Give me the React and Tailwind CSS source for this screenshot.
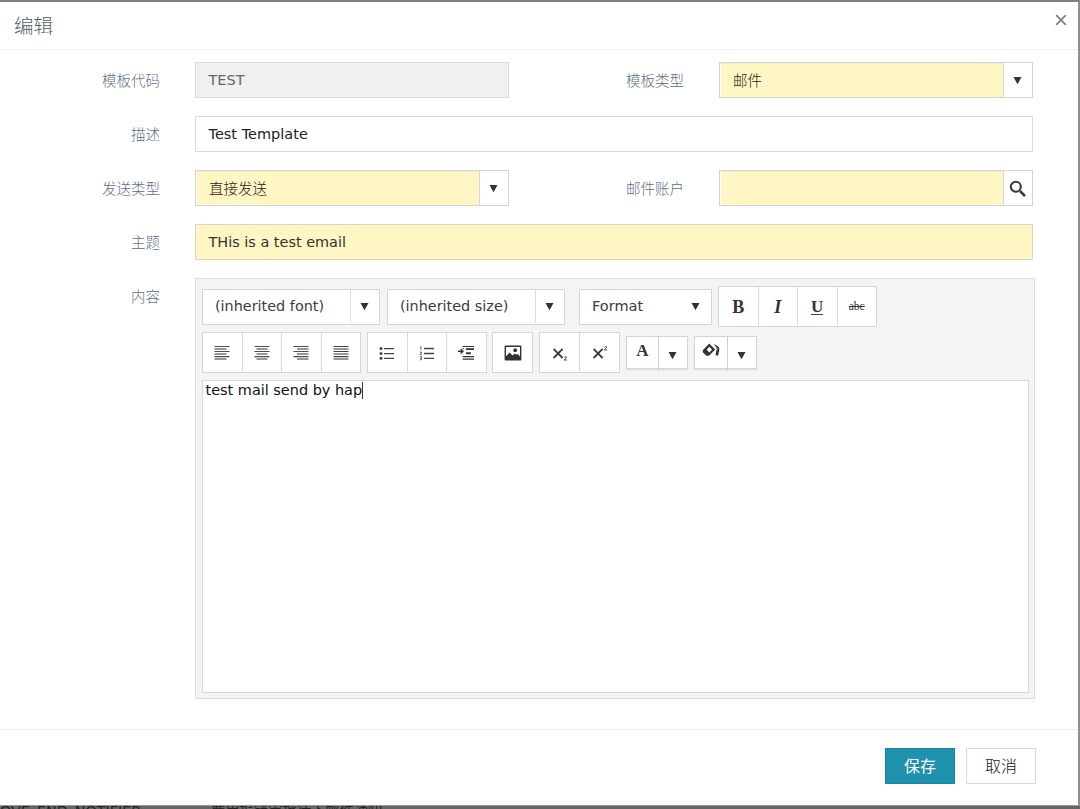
import React from 'react';

const Caret = ({ className = '' }) => (
  <svg className={className} width="9" height="9" viewBox="0 0 9 9" fill="#333">
    <path d="M0.5 1.1h8L4.5 8.2z" />
  </svg>
);

const Label = ({ children, className = '' }) => (
  <label className={`shrink-0 pt-px text-right text-[14.5px] leading-[37px] font-light text-[#5f7088] ${className}`}>
    {children}
  </label>
);

const Row = ({ children }) => <div className="flex h-9">{children}</div>;

function ComboBox({ value, className = '', icon }) {
  return (
    <div className={`flex h-9 border border-[#d5d5d5] bg-white ${className}`}>
      <div className="flex-1 border-t border-l border-t-[#f3ecc8] border-l-[#fffdf0] bg-[#fff6c4] pl-3 text-[14.5px] leading-[34px] text-[#222]">
        {value}
      </div>
      <div className="flex w-[29px] items-center justify-center border-l border-[#d5d5d5] pr-px">
        {icon || <Caret />}
      </div>
    </div>
  );
}

function ToolSelect({ value }) {
  return (
    <div className="flex h-9 w-[178px] border border-[#d5d5d5] bg-white text-[14.4px] leading-[33px] text-[#3c3c3c]">
      <div className="flex-1 pl-3 whitespace-nowrap">{value}</div>
      <div className="flex h-[33px] w-[29px] items-center justify-center border-l border-[#dcdcdc] pr-px">
        <Caret />
      </div>
    </div>
  );
}

const ToolGroup = ({ children, className = '' }) => (
  <div className={`flex h-[41px] divide-x divide-[#d9d9d9] border border-[#d5d5d5] bg-white text-[#333] ${className}`}>
    {React.Children.map(children, (child) => (
      <div className="flex flex-1 items-center justify-center">{child}</div>
    ))}
  </div>
);

function Lines({ from, to }) {
  return (
    <svg width="16" height="16" viewBox="0 0 16 16" fill="none">
      <path stroke="#444" strokeWidth="1.2" d="M0.5 1.5H15.5M0.5 6.5H15.5M0.5 11.6H15.5" className={from === 0.5 && to === 15.5 ? '' : 'opacity-95'} />
      <path stroke="#777" strokeWidth="1.7" d={`M${from} 4H${to}M${from} 9H${to}M${from} 14H${to}`} />
    </svg>
  );
}

const BulletIcon = () => (
  <svg width="16" height="16" viewBox="0 0 16 16" fill="#444">
    <circle cx="2" cy="3.5" r="1.5" />
    <circle cx="2" cy="8.5" r="1.5" />
    <circle cx="2" cy="13.3" r="1.5" />
    <path d="M5 2.9H15V4.2H5zM5 7.9H15V9.2H5zM5 12.7H15V14H5z" />
  </svg>
);

const NumberIcon = () => (
  <svg width="16" height="16" viewBox="0 0 16 16" fill="none" stroke="#444">
    <path strokeWidth="1.3" d="M5 3.5H15M5 8.5H15M5 13.3H15" />
    <path strokeWidth="0.8" d="M1 2.2L2 1.7V4.8M0.8 7H2.4V8L1 9.4H2.8M0.8 11.7H2.5V14.8H0.8M1.2 13.2H2.5" />
  </svg>
);

const IndentIcon = () => (
  <svg width="18" height="16" viewBox="0 0 18 16" fill="#333">
    <path d="M0 5.5H2.6V3.2L6 6.3L2.6 9.4V7.1H0z" />
    <path d="M4.6 0.9H16V2.1H4.6zM8 3.3H16V5.1H8zM8 7.3H12.8V9.2H8zM4.6 11H16V12.2H4.6zM4.6 13.5H16V14.7H4.6zM4.6 3.3H6.2V4.3H4.6z" />
  </svg>
);

const ImageIcon = () => (
  <svg width="18" height="16" viewBox="0 0 18 16" fill="#333">
    <path
      fillRule="evenodd"
      d="M1.6 0.6H16.4Q17.4 0.6 17.4 1.6V14.4Q17.4 15.4 16.4 15.4H1.6Q0.6 15.4 0.6 14.4V1.6Q0.6 0.6 1.6 0.6zM2 2V11.2L5.6 7.4L8.6 10.4L10.6 8.6L12.4 9.8L13.8 9L16 11.4V2z"
    />
    <circle cx="11.2" cy="5.2" r="1.9" />
  </svg>
);

const ScriptIcon = ({ sup }) => (
  <svg width="18" height="18" viewBox="0 0 18 18" fill="none" stroke="#3a3a3a">
    <path strokeWidth="1.8" d="M2.6 4.9L11.6 14M11.6 4.9L2.6 14" />
    <path
      strokeWidth="0.9"
      d={sup ? 'M13.4 3.1Q14.7 2.1 15.7 2.9Q16 3.8 13.3 5.9H16.2' : 'M13.2 13.2Q14.5 12.2 15.5 13Q15.8 13.9 13.1 16H16'}
    />
  </svg>
);

const BucketIcon = () => (
  <svg width="18" height="15" viewBox="0 0 18 15" fill="#333">
    <path fillRule="evenodd" d="M0.8 7.2L7.2 0.6L13.2 6.6L7 12.8H4.4L0.8 9.2zM7.4 3.8L4.7 6.8L7.4 9.4L10 6.8z" />
    <path d="M9.2 1Q13.3 1.4 13.8 4.6L14.6 6.4L13.6 11.8L15 12.8L16.2 12.2L17.4 6.4Q17.2 1.6 9.2 1z" />
    <path stroke="#fff" strokeWidth="0.7" fill="none" d="M10.4 1.8Q14.9 3.2 15.1 7.2" />
  </svg>
);

const SearchIcon = () => (
  <svg className="mt-0.5" width="18" height="18" viewBox="0 0 18 18" fill="none" stroke="#3a3a3a">
    <circle cx="6.8" cy="6.8" r="5" strokeWidth="2.1" />
    <path strokeWidth="2.6" d="M11 11L16 16.1" />
  </svg>
);

function ColorTool({ children, className = '' }) {
  return (
    <div className={`flex h-[33px] border border-[#d5d5d5] bg-white shadow-[0_1px_1px_#e2e2e2] ${className}`}>
      <div className="flex flex-1 items-center justify-center pb-[5px]">{children}</div>
      <div className="flex h-[34px] w-[29px] items-center justify-center border-l border-[#d0d0d0] pt-[2px] pr-px">
        <Caret />
      </div>
    </div>
  );
}

function Editor() {
  return (
    <div className="flex h-[421px] w-[840px] flex-col border border-[#dcdcdc] bg-[#f4f4f4] pt-[7px] pr-[5px] pb-[5px] pl-1.5">
      <div className="flex h-[41px] items-center">
        <ToolSelect value="(inherited font)" />
        <div className="w-[7px]" />
        <ToolSelect value="(inherited size)" />
        <div className="ml-3.5 flex h-9 w-[133px] justify-between border border-[#d5d5d5] bg-white pr-[11px] pl-3 text-[14.5px] leading-[33px] text-[#3c3c3c]">
          Format
          <Caret className="mt-3" />
        </div>
        <ToolGroup className="ml-1.5 w-[159px] font-['Liberation_Serif',serif]">
          <span className="pt-0.5 text-[18px] font-bold">B</span>
          <span className="pt-0.5 text-[18px] font-bold italic">I</span>
          <span className="border-b border-[#444] text-[17px] leading-[15px] font-bold">U</span>
          <span className="text-[11.5px] line-through">abc</span>
        </ToolGroup>
      </div>
      <div className="mt-[5px] flex h-[41px] items-center">
        <ToolGroup className="w-[159px]">
          <Lines from={0.5} to={12.5} />
          <Lines from={2.5} to={13.5} />
          <Lines from={4} to={15.5} />
          <Lines from={0.5} to={15.5} />
        </ToolGroup>
        <ToolGroup className="ml-1.5 w-[120px]">
          <BulletIcon />
          <NumberIcon />
          <IndentIcon />
        </ToolGroup>
        <ToolGroup className="ml-[5px] w-[41px]">
          <ImageIcon />
        </ToolGroup>
        <ToolGroup className="ml-1.5 w-[81px]">
          <ScriptIcon />
          <ScriptIcon sup />
        </ToolGroup>
        <ColorTool className="ml-1.5 w-[62px]">
          <span className="font-['Liberation_Serif',serif] text-[17px] leading-none font-bold text-[#333]">A</span>
        </ColorTool>
        <ColorTool className="ml-1.5 w-[63px]">
          <BucketIcon />
        </ColorTool>
      </div>
      <div className="mt-[7px] flex-1 border border-[#d8d8d8] bg-white pl-[2.5px] text-[14.45px] leading-[19px] text-[#111]">
        test mail send by hap<span className="inline-block h-[17px] w-px bg-[#333] align-[-4px]" />
      </div>
    </div>
  );
}

export default function App() {
  return (
    <div className="h-[809px] w-[1080px] overflow-hidden bg-[#666] font-['DejaVu_Sans','Noto_Sans_CJK_SC',sans-serif]">
      <div className="flex h-[806px] flex-col border-t-2 border-r-2 border-b border-t-[#7e8183] border-r-[#8d8f91] border-b-[#999] bg-white">
        <header className="flex h-12 shrink-0 justify-between border-b border-[#f0f0f0] pr-[11px] pl-3.5">
          <h1 className="text-[19.5px] leading-[49px] font-light text-[#4f6167]">编辑</h1>
          <svg className="mt-3" width="12" height="12" viewBox="0 0 12 12" stroke="#808080" strokeWidth="1.8">
            <path d="M1.2 1.2L10.8 10.8M10.8 1.2L1.2 10.8" />
          </svg>
        </header>

        <main className="flex flex-1 flex-col gap-[18px] pt-3">
          <Row>
            <Label className="mr-[35px] w-40">模板代码</Label>
            <div className="w-[314px] border border-[#d9d9d9] bg-[#f0f0f0] pl-[12.5px] text-[14.5px] leading-[35px] text-[#666]">TEST</div>
            <Label className="mr-[35px] w-[175px]">模板类型</Label>
            <ComboBox value="邮件" className="w-[314px] font-light" />
          </Row>
          <Row>
            <Label className="mr-[35px] w-40">描述</Label>
            <div className="w-[838px] border border-[#d9d9d9] pl-[12.5px] text-[14.5px] leading-[35px] text-[#222]">Test Template</div>
          </Row>
          <Row>
            <Label className="mr-[35px] w-40">发送类型</Label>
            <ComboBox value="直接发送" className="w-[314px] font-light" />
            <Label className="mr-[35px] w-[175px]">邮件账户</Label>
            <ComboBox className="w-[314px]" icon={<SearchIcon />} />
          </Row>
          <Row>
            <Label className="mr-[35px] w-40">主题</Label>
            <div className="w-[838px] border border-[#d9d6c4] bg-[#fff6c4] pl-[12.5px] text-[14.45px] leading-[35px] text-[#333]">THis is a test email</div>
          </Row>
          <div className="flex">
            <Label className="mr-[35px] w-40">内容</Label>
            <Editor />
          </div>
        </main>

        <footer className="flex h-[76px] shrink-0 justify-end gap-[11px] border-t border-[#ececec] pt-[18px] pr-[42px] text-[16px]">
          <button className="h-9 w-[70px] border border-[#1a86a3] bg-[#1e91ae] pt-px text-white">保存</button>
          <button className="h-9 w-[70px] border border-[#d9d9d9] bg-white pt-px font-light text-[#111]">取消</button>
        </footer>
      </div>
      <div className="flex h-[3px] overflow-hidden text-[14.3px] leading-[10px] whitespace-nowrap text-[#222]">
        <span className="w-[211px] shrink-0">OVE_END_NOTIFIER</span>
        <span>费用报销审批待下邮件通知</span>
      </div>
    </div>
  );
}
